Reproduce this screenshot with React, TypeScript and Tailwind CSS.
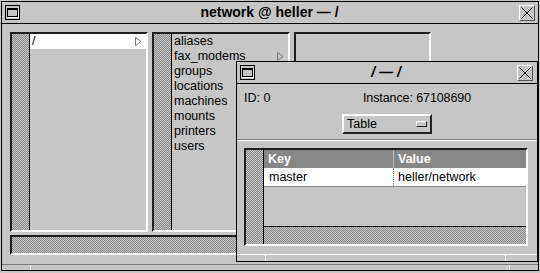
const stipple =
  "bg-[#c6c6c6] bg-[image:repeating-conic-gradient(#8a8a8a_0_25%,#c6c6c6_0_50%)] bg-[length:2px_2px]";
const sunken = "border-2 border-t-[#1e1e1e] border-l-[#1e1e1e] border-b-white border-r-white";

function WinIcon() {
  return (
    <div className="flex h-[15px] w-[15px] items-center justify-center border border-black bg-[#c6c6c6]">
      <div className="h-[9px] w-[11px] border border-t-2 border-black bg-[#c6c6c6] shadow-[1px_1px_0_#fff]" />
    </div>
  );
}

function CloseBox() {
  return (
    <div className="flex h-[16px] w-[16px] items-center justify-center border border-t-white border-l-white border-b-[#555] border-r-[#555]">
      <svg width="12" height="12" viewBox="0 0 12 12">
        <path d="M0.5 0.5 L11.5 11.5 M11.5 0.5 L0.5 11.5" stroke="#000" strokeWidth="1" fill="none" />
      </svg>
    </div>
  );
}

function Arrow() {
  return (
    <svg width="7" height="9" viewBox="0 0 7 9">
      <path d="M0.5 0.5 L6 4.5 L0.5 8.5 Z" stroke="#7a7a7a" fill="none" />
    </svg>
  );
}

const groups = ["aliases", "fax_modems", "groups", "locations", "machines", "mounts", "printers", "users"];

export default function App() {
  return (
    <div className="relative h-[273px] w-[540px] overflow-hidden bg-[#c6c6c6] pl-[1px] pt-[1px] font-['Liberation_Sans',Arial,sans-serif] text-[12.5px] leading-[15px] text-black">
      {/* main window */}
      <div className="flex h-[270px] w-[538px] flex-col border border-black">
        <div className="flex h-[22px] items-center border-b border-black px-[3px]">
          <WinIcon />
          <div className="flex-1 text-center text-[14px] font-bold">network @ heller — /</div>
          <CloseBox />
        </div>

        <div className="flex flex-col px-[8px] pt-[8px]">
          <div className="flex h-[200px] gap-[4px]">
            <div className={`flex w-[138px] ${sunken}`}>
              <div className={`w-[18px] border-r border-black ${stipple}`} />
              <div className="flex-1">
                <div className="flex h-[15px] items-center justify-between bg-white pl-[2px] pr-[4px]">
                  <span>/</span>
                  <Arrow />
                </div>
              </div>
            </div>
            <div className={`flex w-[138px] ${sunken}`}>
              <div className={`w-[18px] border-r border-black ${stipple}`} />
              <div className="flex-1 pl-[2px]">
                {groups.map((g) => (
                  <div key={g} className="flex h-[15px] items-center justify-between pr-[4px]">
                    <span>{g}</span>
                    {g === "fax_modems" && <Arrow />}
                  </div>
                ))}
              </div>
            </div>
            <div className={`w-[137px] ${sunken}`} />
          </div>
          <div className={`mt-[3px] h-[20px] w-[419px] ${sunken}`}>
            <div className={`h-full w-full ${stipple}`} />
          </div>
        </div>

        <div className="flex-1" />
        <div className="flex h-[6px] border-t border-[#7a7a7a]">
          <div className="w-[29px] border-r border-white" />
          <div className="w-[479px] border-r border-white" />
          <div className="flex-1" />
        </div>
      </div>

      {/* properties dialog */}
      <div className="absolute left-[236px] top-[61px] flex h-[201px] w-[302px] flex-col border border-black bg-[#c6c6c6]">
        <div className="flex h-[22px] items-center border-b border-black pl-[3px] pr-[4px]">
          <WinIcon />
          <div className="flex-1 text-center text-[14px] font-bold italic">/ — /</div>
          <CloseBox />
        </div>

        <div className="mt-[7px] flex h-[15px] items-center px-[7px]">
          <span className="w-[119px]">ID: 0</span>
          <span className="tracking-[-0.1px]">Instance: 67108690</span>
        </div>

        <div className="mt-[8px] flex justify-center">
          <div className="flex h-[20px] w-[90px] items-center justify-between border-2 border-t-white border-l-white border-b-[#222] border-r-[#222] pl-[3px] pr-[3px]">
            <span>Table</span>
            <div className="h-[6px] w-[11px] border border-t-white border-l-white border-b-[#222] border-r-[#222]" />
          </div>
        </div>

        <div className="mt-[5px] h-[2px] border-t border-b border-t-[#7a7a7a] border-b-white" />

        <div className={`ml-[7px] mt-[7px] flex h-[98px] w-[284px] ${sunken}`}>
          <div className={`w-[18px] border-r border-black ${stipple}`} />
          <div className="flex flex-1 flex-col">
            <div className="flex h-[18px] bg-[#878787] font-bold text-white">
              <div className="w-[130px] border-r border-[#b8b8b8] pl-[4px] leading-[18px]">Key</div>
              <div className="flex-1 pl-[4px] leading-[18px]">Value</div>
            </div>
            <div className="flex h-[19px] border-b border-[#8a8a8a] bg-white">
              <div className="w-[130px] border-r border-dotted border-[#777] pl-[5px] leading-[18px]">master</div>
              <div className="flex-1 pl-[4px] leading-[18px]">heller/network</div>
            </div>
            <div className="flex-1" />
            <div className={`h-[18px] border-t border-black ${stipple}`} />
          </div>
        </div>

        <div className="flex-1" />
        <div className="flex h-[7px] border-t border-white">
          <div className="w-[29px] border-r border-white" />
          <div className="w-[240px] border-r border-white" />
          <div className="flex-1" />
        </div>
      </div>
    </div>
  );
}
